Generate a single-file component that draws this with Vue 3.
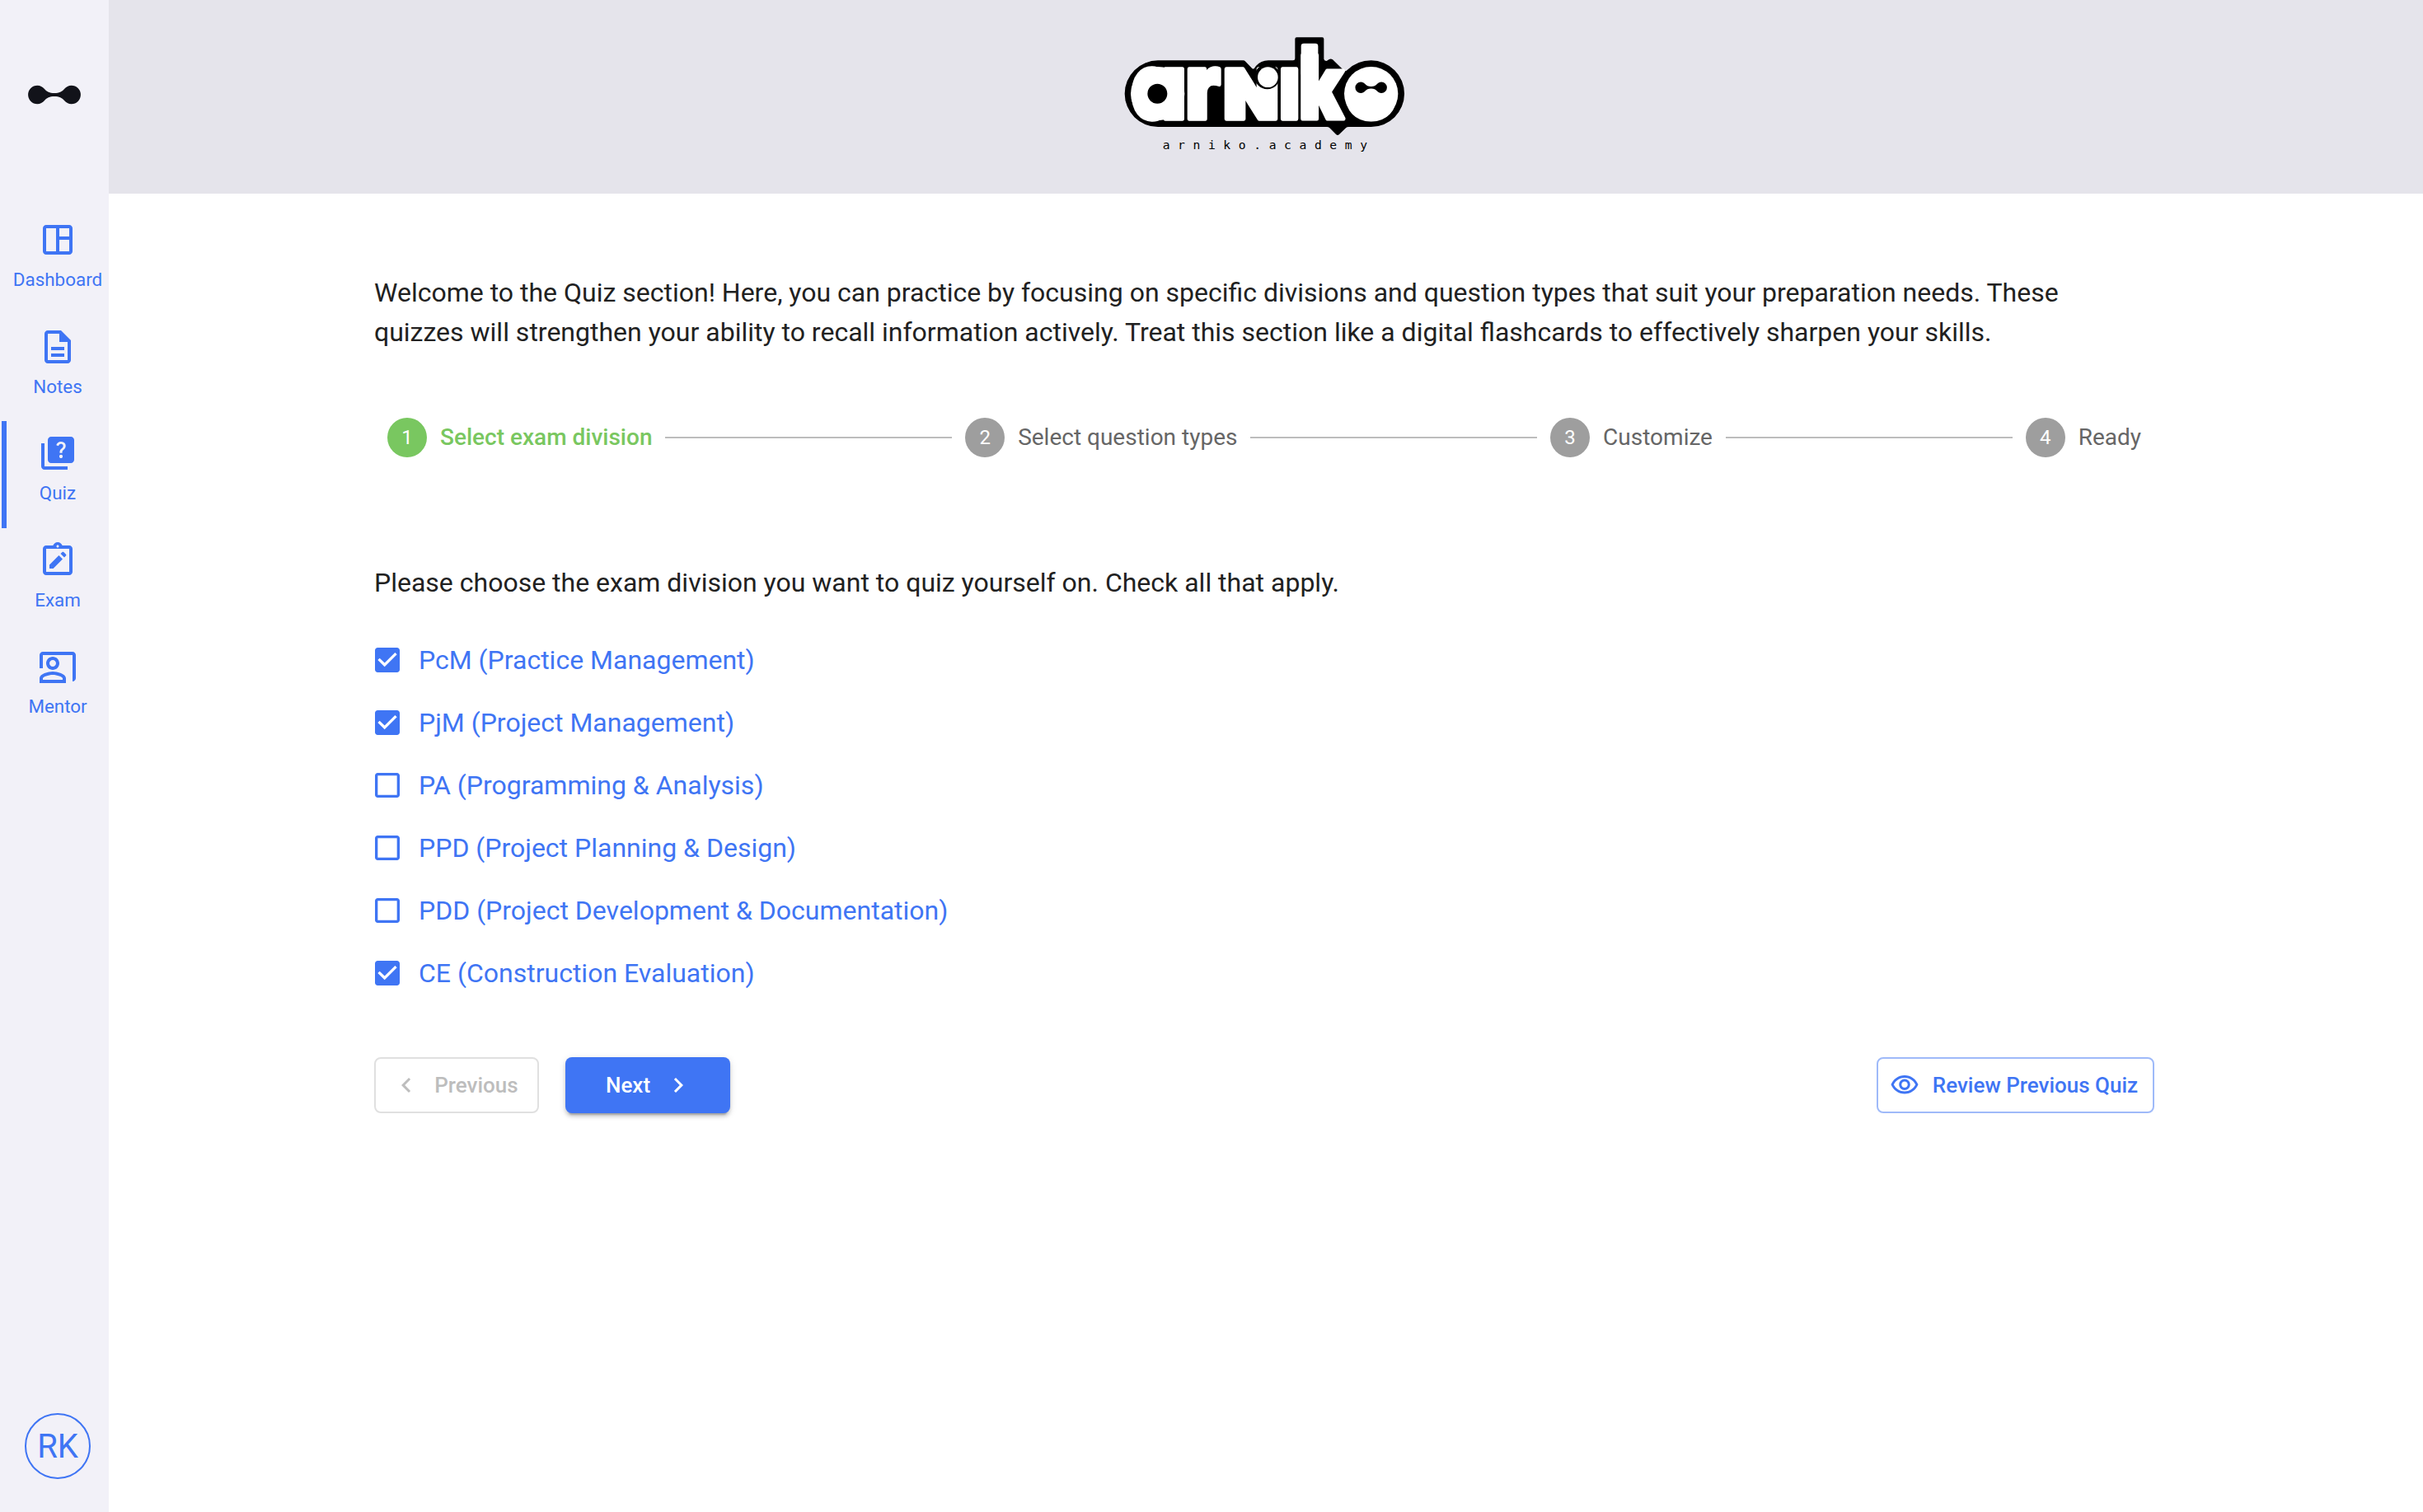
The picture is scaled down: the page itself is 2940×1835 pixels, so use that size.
<template>
  <div class="app-layout">
    <aside class="sidebar">
      <svg class="brand-mark" viewBox="0 0 64 24">
        <path :d="markPath" />
      </svg>

      <nav class="nav">
        <a
          v-for="item in navItems"
          :key="item.label"
          class="nav-item"
          :class="{ 'is-active': item.label === currentPage }"
        >
          <svg class="nav-icon" viewBox="0 0 24 24">
            <path fill-rule="evenodd" :d="item.icon" />
          </svg>
          <span class="nav-label">{{ item.label }}</span>
        </a>
      </nav>

      <div class="avatar">RK</div>
    </aside>

    <div class="page">
      <header class="header">
        <svg class="logo" viewBox="44 44 1016 422">
          <path
            d="M164 129H474Q479 129 483 133L506 157Q511 162 515 157Q534 129 566 129H656Q663 129 663 122V51Q663 45 669 45H762Q768 45 768 51V124Q770 131 778 131L786 126Q793 121 800 126L840 165Q846 171 853 164Q890 129 940 129A121 121 0 0 1 940 371H858Q852 371 848 375L824 398Q818 404 812 398L789 375Q785 371 779 371H164A121 121 0 0 1 164 129Z"
          />
          <g class="logo-letters">
            <circle cx="163" cy="250" r="98" />
            <text
              v-for="l in logoLetters"
              :key="l.char"
              :class="{ caps: l.caps }"
              :transform="`translate(${l.x} ${l.y}) scale(${l.sx} ${l.sy})`"
            >{{ l.char }}</text>
            <circle class="dot-gap" cx="562" cy="188" r="46" />
            <circle cx="564" cy="190" r="37" />
            <rect x="685" y="67" width="62" height="120" rx="10" />
            <circle cx="940" cy="250" r="98" />
          </g>
          <circle cx="162" cy="250" r="36" />
          <path :d="markPath" transform="translate(882 206) scale(1.81)" />
          <text class="logo-domain" x="181" y="452">arniko.academy</text>
        </svg>
      </header>

      <main class="content">
        <p class="text">
          Welcome to the Quiz section! Here, you can practice by focusing on specific divisions and question types that suit your preparation needs. These quizzes will strengthen your ability to recall information actively. Treat this section like a digital flashcards to effectively sharpen your skills.
        </p>

        <div class="stepper">
          <template v-for="(step, idx) in steps" :key="step">
            <div v-if="idx > 0" class="step-line"></div>
            <div class="step" :class="{ 'is-active': idx === activeStep }">
              <span class="step-num">{{ idx + 1 }}</span>
              <span class="step-label">{{ step }}</span>
            </div>
          </template>
        </div>

        <p class="text">Please choose the exam division you want to quiz yourself on. Check all that apply.</p>

        <div class="divisions">
          <div v-for="d in divisions" :key="d.name" class="division" @click="d.checked = !d.checked">
            <svg class="checkbox" viewBox="0 0 24 24">
              <path :d="d.checked ? checkedIcon : uncheckedIcon" />
            </svg>
            <span>{{ d.name }}</span>
          </div>
        </div>

        <div class="actions">
          <button class="btn btn-prev" disabled>
            <svg class="btn-icon start" viewBox="0 0 24 24">
              <path d="M15.41 7.41 14 6l-6 6 6 6 1.41-1.41L10.83 12z" />
            </svg>
            Previous
          </button>
          <button class="btn btn-next">
            Next
            <svg class="btn-icon end" viewBox="0 0 24 24">
              <path d="M10 6 8.59 7.41 13.17 12l-4.58 4.59L10 18l6-6z" />
            </svg>
          </button>
          <button class="btn btn-review">
            <svg class="btn-icon start" viewBox="0 0 24 24">
              <path d="M12 6c3.79 0 7.17 2.13 8.82 5.5C19.17 14.87 15.79 17 12 17s-7.17-2.13-8.82-5.5C4.83 8.13 8.21 6 12 6m0-2C7 4 2.73 7.11 1 11.5 2.73 15.89 7 19 12 19s9.27-3.11 11-7.5C21.27 7.11 17 4 12 4zm0 5c1.38 0 2.5 1.12 2.5 2.5S13.38 14 12 14s-2.5-1.12-2.5-2.5S10.62 9 12 9m0-2c-2.48 0-4.5 2.02-4.5 4.5S9.52 16 12 16s4.5-2.02 4.5-4.5S14.48 7 12 7z" />
            </svg>
            Review Previous Quiz
          </button>
        </div>
      </main>
    </div>
  </div>
</template>

<script setup>
import { ref } from 'vue';

const currentPage = ref('Quiz');
const activeStep = ref(0);

const navItems = [
  {
    label: 'Dashboard',
    icon: 'M19 3H5c-1.1 0-2 .9-2 2v14c0 1.1.9 2 2 2h14c1.1 0 2-.9 2-2V5c0-1.1-.9-2-2-2zM5 19V5h6v14H5zm14 0h-6v-7h6v7zm0-9h-6V5h6v5z'
  },
  {
    label: 'Notes',
    icon: 'M8 16h8v2H8zm0-4h8v2H8zm6-10H6c-1.1 0-2 .9-2 2v16c0 1.1.89 2 1.99 2H18c1.1 0 2-.9 2-2V8l-6-6zm4 18H6V4h7v5h5v11z'
  },
  {
    label: 'Quiz',
    icon: 'M4 6H2v14c0 1.1.9 2 2 2h14v-2H4V6zM20 2H8c-1.1 0-2 .9-2 2v12c0 1.1.9 2 2 2h12c1.1 0 2-.9 2-2V4c0-1.1-.9-2-2-2zm-5.99 13c-.59 0-1.05-.47-1.05-1.05 0-.59.47-1.04 1.05-1.04.59 0 1.04.45 1.04 1.04-.01.58-.45 1.05-1.04 1.05zm2.5-6.17c-.63.93-1.23 1.21-1.56 1.81-.13.24-.18.4-.18 1.18h-1.52c0-.41-.06-1.08.26-1.65.41-.73 1.18-1.16 1.63-1.8.48-.68.21-1.94-1.14-1.94-.88 0-1.32.67-1.5 1.23l-1.37-.57C11.51 5.96 12.52 5 13.99 5c1.23 0 2.08.56 2.51 1.26.37.6.58 1.73.01 2.57z'
  },
  {
    label: 'Exam',
    icon: 'M19 3h-4.18C14.4 1.84 13.3 1 12 1s-2.4.84-2.82 2H5c-1.1 0-2 .9-2 2v14c0 1.1.9 2 2 2h14c1.1 0 2-.9 2-2V5c0-1.1-.9-2-2-2zm-7-.25c.41 0 .75.34.75.75s-.34.75-.75.75-.75-.34-.75-.75.34-.75.75-.75zM19 19H5V5h14v14zM7 14.7L12.7 9 15 11.3 9.3 17H7zM13.75 8l1-1c.25-.25.63-.25.88 0l1.37 1.37c.25.25.25.63 0 .88l-1 1z'
  },
  {
    label: 'Mentor',
    icon: 'M21 3H3c-1.1 0-2 .9-2 2v8h2V5h18v16c1.1 0 2-.9 2-2V5c0-1.1-.9-2-2-2zM9 14c2.21 0 4-1.79 4-4s-1.79-4-4-4-4 1.79-4 4 1.79 4 4 4zm0-6c1.1 0 2 .9 2 2s-.9 2-2 2-2-.9-2-2 .9-2 2-2zM9 15c-2.67 0-8 1.34-8 4v3h16v-3c0-2.66-5.33-4-8-4zm6 5H3v-.99C3.2 18.29 6.3 17 9 17s5.8 1.29 6 2v1z'
  }
];

const steps = ['Select exam division', 'Select question types', 'Customize', 'Ready'];

const divisions = ref([
  { name: 'PcM (Practice Management)', checked: true },
  { name: 'PjM (Project Management)', checked: true },
  { name: 'PA (Programming & Analysis)', checked: false },
  { name: 'PPD (Project Planning & Design)', checked: false },
  { name: 'PDD (Project Development & Documentation)', checked: false },
  { name: 'CE (Construction Evaluation)', checked: true }
]);

// two discs joined by a thin neck, shared by the sidebar and the logo
const markPath = 'M11.3 .8C15 .8 17.6 2.4 20 5C23 8.2 26 10 32 10S41 8.2 44 5C46.4 2.4 49 .8 52.7 .8A11.2 11.2 0 0 1 52.7 23.2C49 23.2 46.4 21.6 44 19C41 15.8 38 14 32 14S23 15.8 20 19C17.6 21.6 15 23.2 11.3 23.2A11.2 11.2 0 0 1 11.3 .8Z';

const logoLetters = [
  { char: 'a', x: 66, y: 340, sx: 0.95, sy: 1 },
  { char: 'r', x: 264, y: 340, sx: 0.89, sy: 1 },
  { char: 'n', x: 398, y: 340, sx: 0.985, sy: 1, caps: true },
  { char: 'ı', x: 604, y: 340, sx: 0.79, sy: 1 },
  { char: 'k', x: 677, y: 340, sx: 0.81, sy: 0.96 },
  { char: 'o', x: 845, y: 340, sx: 0.92, sy: 0.96 }
];

const checkedIcon = 'M19 3H5c-1.11 0-2 .9-2 2v14c0 1.1.89 2 2 2h14c1.11 0 2-.9 2-2V5c0-1.1-.89-2-2-2zm-9 14l-5-5 1.41-1.41L10 14.17l7.59-7.59L19 8l-9 9z';
const uncheckedIcon = 'M19 5v14H5V5h14m0-2H5c-1.1 0-2 .9-2 2v14c0 1.1.9 2 2 2h14c1.1 0 2-.9 2-2V5c0-1.1-.9-2-2-2z';
</script>

<style>
body { margin: 0; background: #fff; }
</style>

<style scoped>
.app-layout {
  display: flex;
  height: 100vh;
  overflow: hidden;
  font-family: Roboto, "Liberation Sans", sans-serif;
  color: #212121;
}

/* sidebar */
.sidebar {
  width: 132px; flex-shrink: 0;
  box-sizing: border-box;
  padding: 103px 0 40px;
  display: flex; flex-direction: column;
  background: #f2f1f8;
  color: #3f75f4;
}
.brand-mark { width: 64px; height: 24px; margin-left: 34px; fill: #12131a; flex-shrink: 0; }
.nav { margin: 125px 0 0 2px; width: 130px; }
.nav-item {
  height: 129.5px; width: 136px;
  box-sizing: border-box;
  padding-top: 15px;
  display: flex; flex-direction: column; align-items: center;
}
.nav-item.is-active { box-shadow: inset 6px 0 0 #3f75f4; }
.nav-icon { width: 48px; height: 48px; fill: currentColor; }
.nav-label { margin-top: 4px; font-size: 22.4px; line-height: 40px; }
.avatar {
  margin: auto 0 0 30px;
  width: 80px; height: 80px;
  box-sizing: border-box;
  border: 2px solid #3f75f4; border-radius: 50%;
  display: flex; align-items: center; justify-content: center;
  font-size: 40px;
}

/* header */
.page { flex: 1; min-width: 0; display: flex; flex-direction: column; }
.header {
  height: 235px; flex-shrink: 0;
  box-sizing: border-box;
  padding: 45px 4px 0 0;
  display: flex; justify-content: center;
  background: #e5e4eb;
}
.logo { width: 338.7px; height: 140.7px; overflow: visible; }
.logo-letters { fill: #fff; }
.logo-letters text {
  font-family: Inter, sans-serif; font-size: 330px; font-weight: 900;
  font-feature-settings: "cv11";
  stroke: #fff; stroke-width: 16px; stroke-linejoin: round;
}
.logo-letters .caps { font-variant-caps: small-caps; }
.dot-gap { fill: #000; }
.logo-domain { font-family: "DejaVu Sans Mono", monospace; font-size: 44px; letter-spacing: 28.8px; }

/* content */
.content { width: 2160px; margin-left: 322px; padding-top: 96px; }
.text { margin: 0; font-size: 32px; line-height: 48px; }

.stepper { display: flex; align-items: center; margin: 80px 0 128px; height: 48px; }
.step { display: flex; align-items: center; padding: 0 16px; color: #666; font-size: 28px; }
.step-num {
  width: 48px; height: 48px; margin-right: 16px;
  border-radius: 50%;
  display: flex; align-items: center; justify-content: center;
  background: #9e9e9e; color: #fff; font-size: 24px;
}
.step-label { line-height: 40px; padding-bottom: 1px; white-space: nowrap; }
.step.is-active { color: #79c760; font-weight: 500; }
.step.is-active .step-num { background: #79c760; font-weight: 400; }
.step-line { flex: 1 1 auto; height: 2px; background: #bdbdbd; }

.divisions { margin: 32px 0 64px -4px; color: #3f75f4; }
.division {
  height: 76px;
  display: flex; align-items: center; gap: 18px;
  font-size: 32px;
}
.checkbox { width: 40px; height: 40px; fill: currentColor; }

.actions { display: flex; gap: 32px; }
.btn {
  width: 200px; height: 68px;
  box-sizing: border-box; padding: 0;
  display: flex; align-items: center; justify-content: center;
  border: 2px solid transparent; border-radius: 8px;
  background: transparent;
  font-family: inherit; font-size: 26px; font-weight: 500; white-space: nowrap;
}
.btn-icon { width: 36px; height: 36px; fill: currentColor; }
.btn-icon.start { margin: 0 16px 0 -4px; }
.btn-icon.end { margin: 0 -4px 0 16px; }
.btn-prev { border-color: #e0e0e0; color: #bdbdbd; }
.btn-next {
  border: 0;
  background: #3f75f4; color: #fff;
  box-shadow: 0 6px 2px -4px rgba(0, 0, 0, 0.2), 0 4px 4px rgba(0, 0, 0, 0.14), 0 2px 10px rgba(0, 0, 0, 0.12);
}
.btn-review { width: 337px; margin-left: auto; border-color: #9fbaf9; color: #3f75f4; }
</style>
